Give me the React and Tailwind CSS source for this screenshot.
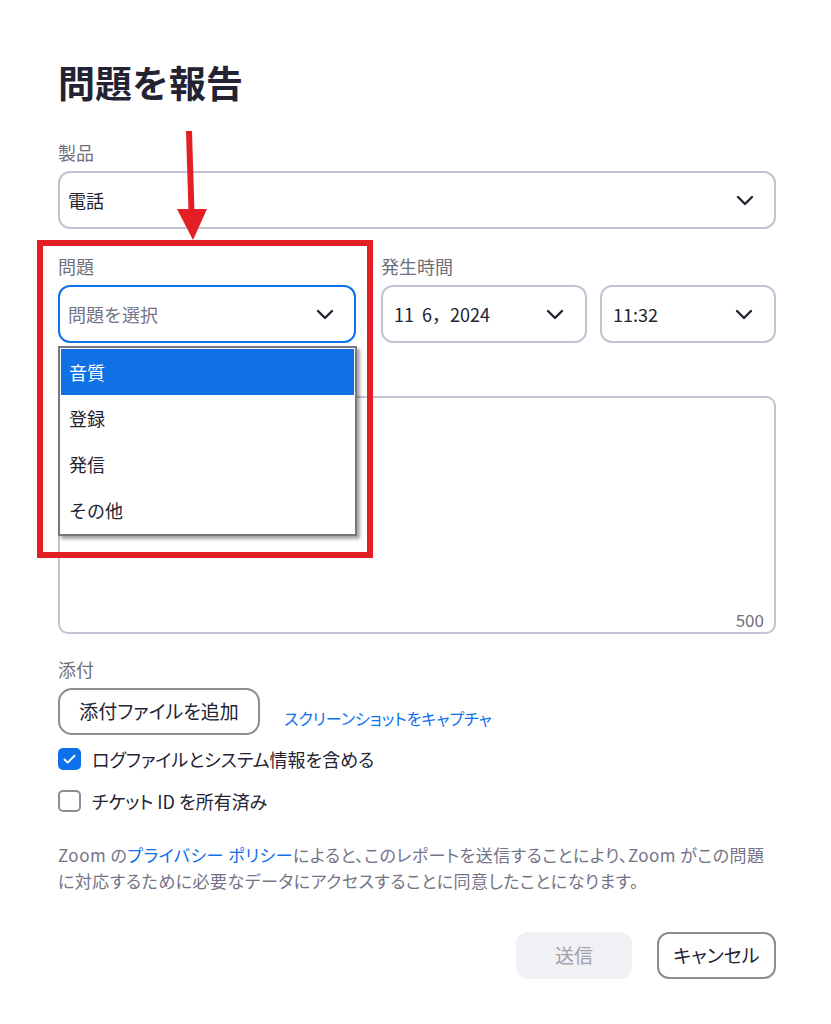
import { Check } from "lucide-react";

const font = { fontFamily: '"Noto Sans CJK JP", "Noto Sans", sans-serif' };

function Chevron({ className = "" }) {
  return (
    <svg width="18" height="11" viewBox="0 0 18 11" fill="none" className={className}>
      <path d="M2 2l7 7 7-7" stroke="#232333" strokeWidth="2.4" strokeLinecap="round" strokeLinejoin="round" />
    </svg>
  );
}

const labelClass = "text-[18px] leading-[24px] text-[#6f6f7b]";
const selectClass =
  "flex h-[58px] items-center justify-between rounded-[12px] border-2 bg-white text-[18px] text-[#232333]";

export default function App() {
  const options = ["音質", "登録", "発信", "その他"];

  return (
    <div className="relative min-h-[1024px] w-[831px] bg-white pl-[58px] pr-[55px] pt-[58px]" style={font}>
      <h1 className="text-[37px] font-bold leading-[48px] text-[#232333]">問題を報告</h1>

      {/* 製品 */}
      <div className={`mt-[34px] ${labelClass}`}>製品</div>
      <div className={`mt-[7px] border-[#c4c2d3] pl-[8px] pr-[20px] ${selectClass}`}>
        <span>電話</span>
        <Chevron />
      </div>

      {/* 問題 / 発生時間 */}
      <div className="mt-[25px] flex">
        <div className="relative w-[298px]">
          <div className={labelClass}>問題</div>
          <div className={`mt-[7px] border-[#0e71eb] pl-[8px] pr-[20px] ${selectClass}`}>
            <span className="text-[#747487]">問題を選択</span>
            <Chevron />
          </div>
          {/* open menu */}
          <div className="absolute left-0 top-[92px] z-10 w-[299px] border-2 border-[#77777f] bg-white p-px shadow-[3px_3px_3px_rgba(0,0,0,0.35)]">
            {options.map((o, i) => (
              <div
                key={o}
                className={`flex h-[46px] items-center px-[8px] text-[18px] ${
                  i === 0 ? "bg-[#1071e5] text-white" : "text-[#232333]"
                }`}
              >
                {o}
              </div>
            ))}
          </div>
        </div>
        <div className="ml-[25px]">
          <div className={labelClass}>発生時間</div>
          <div className="mt-[7px] flex gap-[13px]">
            <div className={`w-[206px] border-[#c4c2d3] pl-[11px] pr-[21px] ${selectClass}`}>
              <span className="whitespace-pre">11  6，2024</span>
              <Chevron />
            </div>
            <div className={`w-[176px] border-[#c4c2d3] pl-[11px] pr-[21px] ${selectClass}`}>
              <span>11:32</span>
              <Chevron />
            </div>
          </div>
        </div>
      </div>

      {/* description */}
      <div className="mt-[53px] flex h-[238px] items-end justify-end rounded-[10px] border-2 border-[#c4c2d3] pb-[1px] pr-[10px]">
        <span className="text-[17px] leading-[22px] text-[#6f6f7b]">500</span>
      </div>

      {/* 添付 */}
      <div className={`mt-[23px] ${labelClass}`}>添付</div>
      <div className="mt-[7px] flex">
        <button className="h-[47px] w-[202px] rounded-[14px] border-2 border-[#8c8c94] text-[19px] text-[#232333] [font-feature-settings:'palt']">
          添付ファイルを追加
        </button>
        <a className="mb-[7px] ml-[24px] self-end text-[16px] leading-[20px] text-[#0e71eb] [font-feature-settings:'palt']">
          スクリーンショットをキャプチャ
        </a>
      </div>

      <div className="mt-[12px] flex h-[24px] items-center gap-[11px]">
        <span className="flex h-[22px] w-[23px] items-center justify-center rounded-[5px] bg-[#0e71eb]">
          <Check className="h-[15px] w-[15px] text-white" strokeWidth={3} />
        </span>
        <span className="text-[18px] text-[#232333] [font-feature-settings:'palt']">ログファイルとシステム情報を含める</span>
      </div>
      <div className="mt-[18px] flex h-[24px] items-center gap-[11px]">
        <span className="h-[22px] w-[23px] rounded-[5px] border-2 border-[#8c8c94] bg-white" />
        <span className="text-[18px] text-[#232333] [font-feature-settings:'palt']">チケット ID を所有済み</span>
      </div>

      <p className="mt-[29px] whitespace-nowrap text-[17px] leading-[26px] tracking-[0.5px] text-[#747487] [font-feature-settings:'palt']">
        Zoom の<a className="text-[#0e71eb]">プライバシー ポリシー</a>によると、このレポートを送信することにより、Zoom がこの問題
        <br />
        に対応するために必要なデータにアクセスすることに同意したことになります。
      </p>

      <div className="mt-[38px] flex justify-end gap-[25px]">
        <button className="h-[47px] w-[116px] rounded-[12px] bg-[#f1f1f5] text-[19px] text-[#a0a0ac]">送信</button>
        <button className="h-[47px] w-[119px] rounded-[12px] border-2 border-[#8c8c94] bg-white text-[19px] text-[#232333] [font-feature-settings:'palt']">
          キャンセル
        </button>
      </div>

      {/* annotation overlay */}
      <div className="pointer-events-none absolute left-[37px] top-[240px] z-20 h-[318px] w-[336px] border-[6px] border-[#e31e24]" />
      <svg className="pointer-events-none absolute left-0 top-0 z-20" width="831" height="260">
        <path d="M189 131 L191.5 212" stroke="#e31e24" strokeWidth="6" />
        <polygon points="177,209 207,209 193,240" fill="#e31e24" />
      </svg>
    </div>
  );
}
